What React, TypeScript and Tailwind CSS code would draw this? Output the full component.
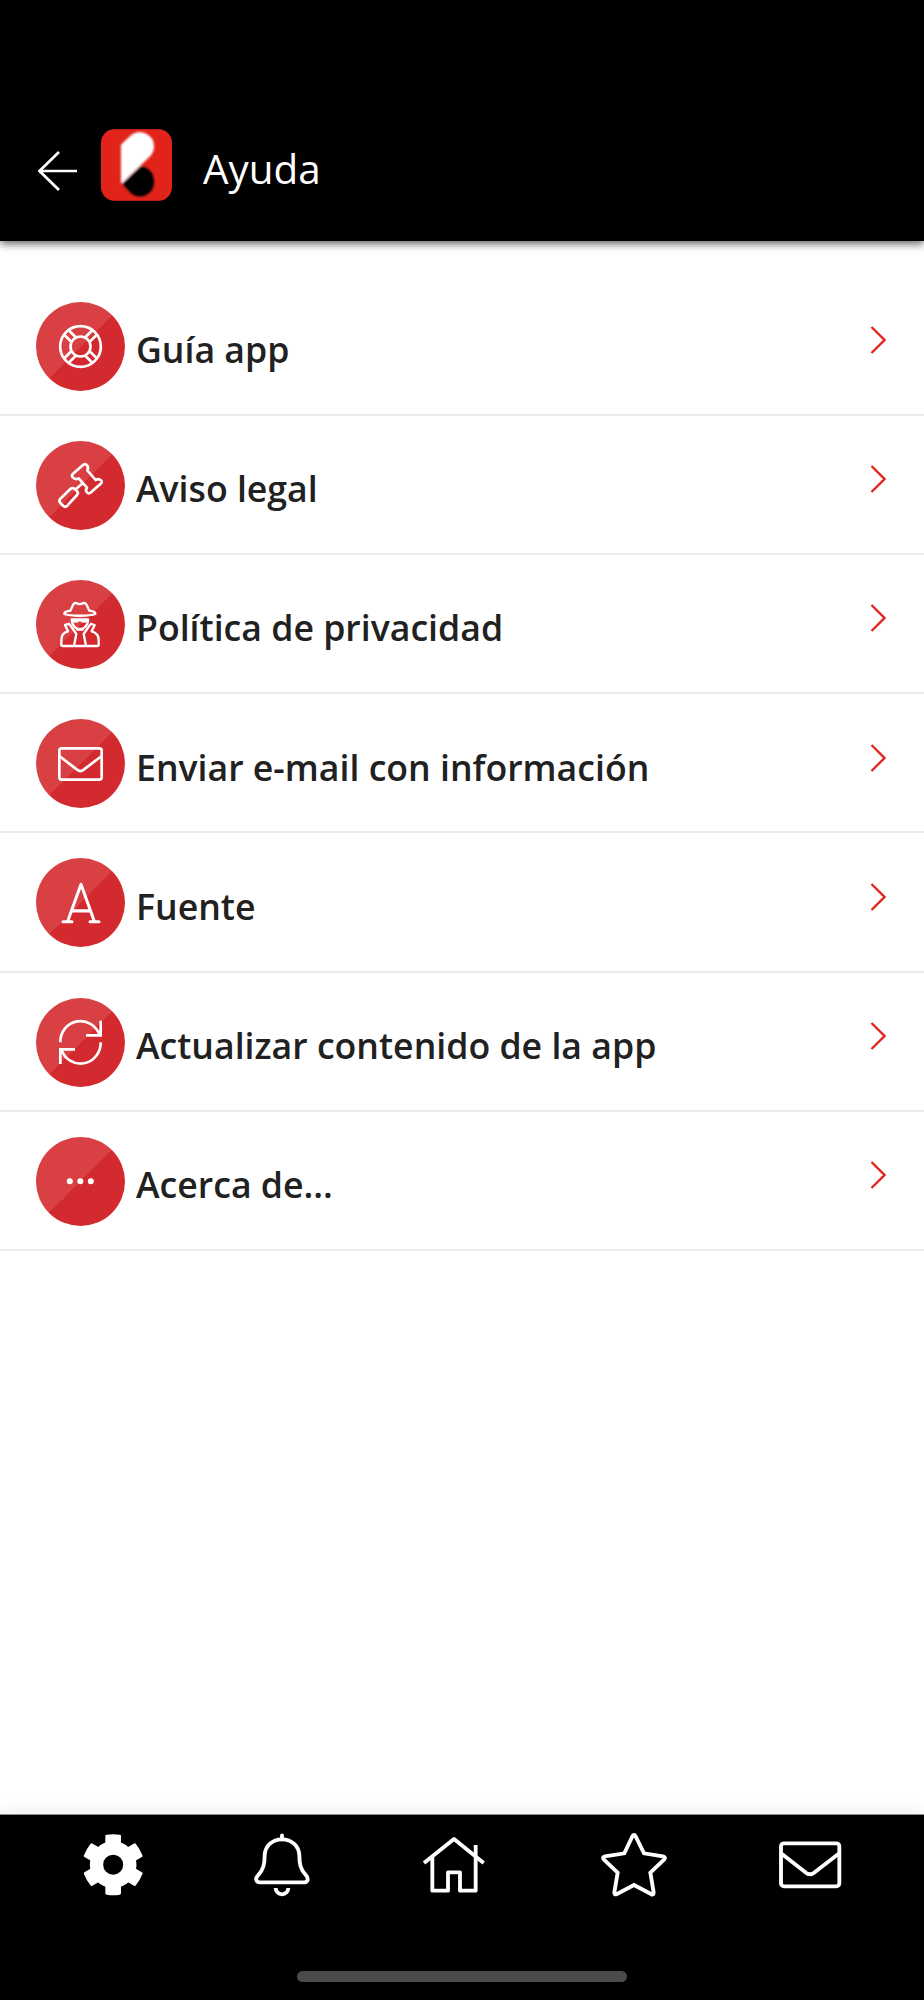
import type { ReactNode } from 'react';
import { FaFont } from 'react-icons/fa6';

type MenuItem = {
    label: string;
    icon: ReactNode;
};

const iconProps = {
    width: 89,
    height: 89,
    fill: 'none',
    stroke: 'white',
    strokeWidth: 8,
    strokeLinejoin: 'round' as const,
};

function GuideIcon() {
    return (
        <svg {...iconProps} viewBox="48 36 267 267">
            <circle cx="181.5" cy="169.5" r="61" />
            <circle cx="181.5" cy="169.5" r="30" />
            {[45, 135, 225, 315].map((angle) => (
                <path key={angle} d="M210 160H240M210 179H240" transform={`rotate(${angle} 181.5 169.5)`} />
            ))}
        </svg>
    );
}

function LegalIcon() {
    return (
        <svg {...iconProps} viewBox="48 33 267 267">
            <path d="M159 143Q153 137 159 131L189 105Q195 100 200 105Q207 112 202 121L227 150Q236 144 243 151Q248 156 242 161L213 187Q207 193 201 187Q195 181 201 173L176 145Q166 150 159 143Z" />
            <path d="M188 160L168 177" />
            <path d="M121 206L151 177Q157 172 163 176L170 182Q177 188 171 195L142 227Q136 233 130 228L121 219Q115 212 121 206Z" />
        </svg>
    );
}

function PrivacyIcon() {
    return (
        <svg {...iconProps} strokeWidth={7} viewBox="48 30 267 267">
            <path d="M151 122C136 124 132 128 133 132C151 139 208 139 226 132C227 128 223 124 208 122L199 103Q195 97 188 100Q179 105 171 100Q164 97 160 103Z" />
            <path d="M154 147H205L204 152Q190 161 180 151Q168 161 155 152Z" fill="white" strokeWidth="4" />
            <path d="M155 149C157 187 202 187 205 149" />
            <path d="M150 161L135 165L144 184C128 188 124 197 124 210V224Q124 228 129 228H232Q236 228 236 224V210C236 197 230 188 215 184L224 165L210 161" />
            <path d="M149 163L169 192L162 228M211 163L191 192L198 228M169 179H191" />
        </svg>
    );
}

function MailIcon() {
    return (
        <svg {...iconProps} viewBox="48 27 267 267">
            <rect x="118" y="115" width="127" height="94" rx="7" />
            <path d="M118 138L171 179Q181 187 191 179L245 138" />
        </svg>
    );
}

// The stock glyph is too heavy, so its outline is trimmed with the circle's own colours
function FontIcon() {
    return (
        <>
            <svg width="0" height="0">
                <linearGradient id="trim" gradientUnits="userSpaceOnUse" x1="0" y1="0" x2="480" y2="480">
                    <stop offset="0.5" stopColor="#d94044" />
                    <stop offset="0.5" stopColor="#d32a2f" />
                </linearGradient>
            </svg>
            <FaFont
                className="h-[50px] w-[42px] shrink-0 overflow-visible text-white"
                preserveAspectRatio="none"
                stroke="url(#trim)"
                strokeWidth={32}
            />
        </>
    );
}

function RefreshIcon() {
    return (
        <svg {...iconProps} strokeLinejoin="miter" viewBox="48 38 267 267">
            <path d="M121 171A60.5 62 0 0 1 239 150M242 106V150H198" />
            <path d="M242 171A60.5 62 0 0 1 124 192M121 236V192H165" />
        </svg>
    );
}

function MoreIcon() {
    return (
        <svg {...iconProps} stroke="none" fill="white" viewBox="48 51 267 267">
            <circle cx="149.5" cy="184" r="9" />
            <circle cx="181" cy="184" r="9" />
            <circle cx="212.5" cy="184" r="9" />
        </svg>
    );
}

const items: MenuItem[] = [
    { label: 'Guía app', icon: <GuideIcon /> },
    { label: 'Aviso legal', icon: <LegalIcon /> },
    { label: 'Política de privacidad', icon: <PrivacyIcon /> },
    { label: 'Enviar e-mail con información', icon: <MailIcon /> },
    { label: 'Fuente', icon: <FontIcon /> },
    { label: 'Actualizar contenido de la app', icon: <RefreshIcon /> },
    { label: 'Acerca de...', icon: <MoreIcon /> },
];

function Header() {
    return (
        <header className="relative flex h-[241px] shrink-0 items-start bg-black pl-[38px] pt-[129px] text-white shadow-[0_3px_8px_rgba(0,0,0,0.6)]">
            <button type="button" aria-label="Volver" className="mt-[22px]">
                <svg width="40" height="40" viewBox="0 0 40 40" fill="none" stroke="white" strokeWidth="2.7">
                    <path d="M39 20H1.5M21 1L1.5 20L21 39" />
                </svg>
            </button>
            <svg className="ml-[23px] rounded-[14px]" width="71" height="72" viewBox="302 87 214 216">
                <filter id="soft">
                    <feGaussianBlur stdDeviation="2.5" />
                </filter>
                <rect x="302" y="87" width="214" height="216" fill="#e2231a" />
                <g filter="url(#soft)">
                    <path d="M366 251L421 199Q462 205 462 249A43 43 0 0 1 393 281Z" fill="black" />
                    <path d="M362 134L394 104A43 43 0 0 1 462 138Q462 156 450 169L366 249H362Z" fill="white" />
                </g>
            </svg>
            <h1 className="ml-[31px] mt-[12px] text-[40.4px] leading-[55px]">Ayuda</h1>
        </header>
    );
}

function MenuRow({ label, icon }: MenuItem) {
    return (
        <li className="flex h-[139.2px] items-start border-b-2 border-[#ebebeb] pl-9 pr-[38px] pt-[25px]">
            <div className="flex size-[89px] shrink-0 items-center justify-center rounded-full bg-linear-135 from-[#d94044] from-50% to-[#d32a2f] to-50%">
                {icon}
            </div>
            <span className="ml-[11px] mt-[23.4px] grow whitespace-nowrap text-[35.65px] font-semibold leading-[48px] text-[#212121]">
                {label}
            </span>
            <svg className="mt-[24.4px]" width="16" height="28" viewBox="0 0 16 28" fill="none" stroke="#e2231a" strokeWidth="2.3">
                <path d="M1.5 1L14.5 14L1.5 27" />
            </svg>
        </li>
    );
}

function BottomNav() {
    return (
        <footer className="relative flex h-[186px] shrink-0 flex-col items-center border-t border-[#8c8f8e] bg-black shadow-[0_-2px_16px_rgba(0,0,0,0.08)]">
            <nav className="flex w-full pl-[83px] pt-[15px]">
                <svg width="60" height="70" viewBox="69 90 180 210" fill="white">
                    <path
                        fillRule="evenodd"
                        d="M159.5 124A70 70 0 1 0 159.5 264A70 70 0 1 0 159.5 124ZM159.5 164A30 30 0 1 1 159.5 224A30 30 0 1 1 159.5 164Z"
                    />
                    {[0, 60, 120, 180, 240, 300].map((angle) => (
                        <path
                            key={angle}
                            d="M136 135V108Q136 104 140 104Q159.5 101 179 104Q183 104 183 108V135Z"
                            transform={`rotate(${angle} 159.5 194)`}
                        />
                    ))}
                </svg>
                <svg className="ml-[109px]" width="60" height="70" viewBox="576 90 180 210" fill="none" stroke="white" strokeWidth="11.5">
                    <path d="M666 106V118" strokeLinecap="round" />
                    <path d="M666 118C636 118 615 139 614 166C614 191 611 208 594 226C583 237 590 247 600 247H732C742 247 748 237 738 226C721 208 718 191 718 166C717 139 696 118 666 118Z" />
                    <path d="M647 264A19 19 0 0 0 685 264" />
                </svg>
                <svg className="ml-[110px]" width="64" height="70" viewBox="1086 90 192 210" fill="none" stroke="white" strokeWidth="11.5" strokeLinejoin="round">
                    <path d="M1092 189L1182 117L1271 189" />
                    <path d="M1117 170V272H1164V217H1200V272H1247V135" />
                </svg>
                <svg className="ml-[114px]" width="68" height="70" viewBox="360 90 204 210" fill="none" stroke="white" strokeWidth="11.5">
                    <path d="M457 109Q462 100 467 109L492 160L549 169Q559 171 552 179L511 218L521 277Q521 287 513 282L462 255L411 282Q402 286 403 277L413 218L372 179Q365 171 375 169L433 160Z" />
                </svg>
                <svg className="ml-[110px]" width="64" height="70" viewBox="894 90 192 210" fill="none" stroke="white" strokeWidth="11.5">
                    <rect x="903" y="130" width="175" height="129" rx="9" />
                    <path d="M903 160L976 217Q990 229 1004 217L1078 160" />
                </svg>
            </nav>
            <div className="mt-[71px] h-[11px] w-[330px] rounded-full bg-[#4a4a4a]" />
        </footer>
    );
}

function App() {
    return (
        <div className="flex h-[2000px] w-[924px] flex-col overflow-hidden bg-white font-['Open_Sans','Noto_Sans',sans-serif]">
            <Header />
            <main className="flex-1 pt-[35.7px]">
                <ul>
                    {items.map((item) => (
                        <MenuRow key={item.label} {...item} />
                    ))}
                </ul>
            </main>
            <BottomNav />
        </div>
    );
}

export default App;
